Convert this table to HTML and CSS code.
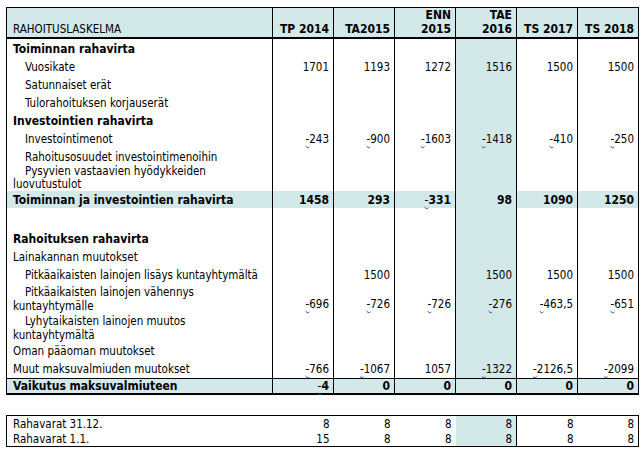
FILE: index.html
```html
<!DOCTYPE html>
<html lang="fi">
<head>
<meta charset="utf-8">
<title>Rahoituslaskelma</title>
<link rel="stylesheet" href="styles.css">
</head>
<body>
<div class="page">
<table class="sheet main">
<colgroup><col class="c-label"><col class="c-num"><col class="c-num"><col class="c-num"><col class="c-num"><col class="c-num"><col class="c-num"></colgroup>
<thead>
<tr class="head">
<th class="label">RAHOITUSLASKELMA</th><th>TP 2014</th><th>TA2015</th><th>ENN<br>2015</th><th class="tae">TAE<br>2016</th><th>TS 2017</th><th>TS 2018</th>
</tr>
</thead>
<tbody>
<tr class="first"><td class="label b">Toiminnan rahavirta</td><td></td><td></td><td></td><td class="tae"></td><td></td><td></td></tr>
<tr class="r18"><td class="label sub">Vuosikate</td><td>1701</td><td>1193</td><td>1272</td><td class="tae">1516</td><td>1500</td><td>1500</td></tr>
<tr class="r18"><td class="label sub">Satunnaiset erät</td><td></td><td></td><td></td><td class="tae"></td><td></td><td></td></tr>
<tr class="r18"><td class="label sub">Tulorahoituksen korjauserät</td><td></td><td></td><td></td><td class="tae"></td><td></td><td></td></tr>
<tr class="r18"><td class="label b">Investointien rahavirta</td><td></td><td></td><td></td><td class="tae"></td><td></td><td></td></tr>
<tr class="r18"><td class="label sub">Investointimenot</td><td><span class="neg">-</span>243</td><td><span class="neg">-</span>900</td><td><span class="neg">-</span>1603</td><td class="tae"><span class="neg">-</span>1418</td><td><span class="neg">-</span>410</td><td><span class="neg">-</span>250</td></tr>
<tr class="r17"><td class="label sub">Rahoitusosuudet investointimenoihin</td><td></td><td></td><td></td><td class="tae"></td><td></td><td></td></tr>
<tr class="r26"><td class="label sub tight">Pysyvien vastaavien hyödykkeiden<br>luovutustulot</td><td></td><td></td><td></td><td class="tae"></td><td></td><td></td></tr>
<tr class="r17 band b"><td class="label">Toiminnan ja investointien rahavirta</td><td>1458</td><td>293</td><td><span class="neg">-</span>331</td><td>98</td><td>1090</td><td>1250</td></tr>
<tr class="r22"><td class="label"></td><td></td><td></td><td></td><td class="tae"></td><td></td><td></td></tr>
<tr class="r18"><td class="label b">Rahoituksen rahavirta</td><td></td><td></td><td></td><td class="tae"></td><td></td><td></td></tr>
<tr class="r18"><td class="label">Lainakannan muutokset</td><td></td><td></td><td></td><td class="tae"></td><td></td><td></td></tr>
<tr class="r18"><td class="label sub">Pitkäaikaisten lainojen lisäys kuntayhtymältä</td><td></td><td>1500</td><td></td><td class="tae">1500</td><td>1500</td><td>1500</td></tr>
<tr class="r29"><td class="label sub">Pitkäaikaisten lainojen vähennys<br>kuntayhtymälle</td><td class="low"><span class="neg">-</span>696</td><td class="low"><span class="neg">-</span>726</td><td class="low"><span class="neg">-</span>726</td><td class="tae low"><span class="neg">-</span>276</td><td class="low"><span class="neg">-</span>463,5</td><td class="low"><span class="neg">-</span>651</td></tr>
<tr class="r29"><td class="label sub">Lyhytaikaisten lainojen muutos<br>kuntayhtymältä</td><td></td><td></td><td></td><td class="tae"></td><td></td><td></td></tr>
<tr class="r18"><td class="label">Oman pääoman muutokset</td><td></td><td></td><td></td><td class="tae"></td><td></td><td></td></tr>
<tr class="r18"><td class="label">Muut maksuvalmiuden muutokset</td><td><span class="neg">-</span>766</td><td><span class="neg">-</span>1067</td><td>1057</td><td class="tae"><span class="neg">-</span>1322</td><td><span class="neg">-</span>2126,5</td><td><span class="neg">-</span>2099</td></tr>
<tr class="r16 band b total"><td class="label">Vaikutus maksuvalmiuteen</td><td><span class="neg">-</span>4</td><td>0</td><td>0</td><td>0</td><td>0</td><td>0</td></tr>
</tbody>
</table>

<table class="sheet cash">
<colgroup><col class="c-label"><col class="c-num"><col class="c-num"><col class="c-num"><col class="c-num"><col class="c-num"><col class="c-num"></colgroup>
<tbody>
<tr><td class="label">Rahavarat 31.12.</td><td>8</td><td>8</td><td>8</td><td class="tae">8</td><td>8</td><td>8</td></tr>
<tr><td class="label">Rahavarat 1.1.</td><td>15</td><td>8</td><td>8</td><td class="tae">8</td><td>8</td><td>8</td></tr>
</tbody>
</table>
</div>
</body>
</html>
```

FILE: styles.css
```css
html, body {
  margin: 0;
  padding: 0;
  background: #ffffff;
}

.page {
  padding: 7px 0 0 6px;
  font-family: "DejaVu Sans Condensed", "DejaVu Sans", sans-serif;
  font-stretch: condensed;
  font-size: 11.5px;
  color: #000;
}

.sheet {
  border-collapse: collapse;
  table-layout: fixed;
  width: 632px;
}

.c-label { width: 266px; }
.c-num { width: 61px; }

.sheet td, .sheet th {
  padding: 0 4px 0 0;
  line-height: 14px;
  text-align: right;
  vertical-align: middle;
  white-space: nowrap;
  font-weight: normal;
}

.sheet .label {
  text-align: left;
  padding-left: 6px;
}

.sheet .sub { text-indent: 12px; }

.sheet .tight { line-height: 13px; }

.sheet .b, .sheet .b td { font-weight: bold; font-size: 12px; }

.sheet td.low { vertical-align: bottom; padding-bottom: 2px; }

.main {
  border: 1px solid #000;
  border-bottom-width: 2px;
}

.main td, .main th {
  border-left: 1px solid #000;
  border-right: 1px solid #000;
}

.head th {
  background: #d2e8e9;
  font-weight: bold;
  font-size: 12px;
  border-bottom: 2px solid #000;
  height: 27px;
  padding-bottom: 1px;
  vertical-align: bottom;
  line-height: 14px;
}

.head th.label { font-weight: normal; font-size: 11.5px; }

.tae { background: #d2e8e9; }
.band td { background: #d2e8e9; }

.first { height: 20px; }
.first td { vertical-align: bottom; padding-bottom: 2px; }

.r16 { height: 16px; }
.r17 { height: 17px; }
.r18 { height: 18px; }
.r22 { height: 22px; }
.r26 { height: 26px; }
.r29 { height: 29px; }

.total td { border-top: 1px solid #000; }

.neg {
  text-decoration: underline wavy #2a4bd7;
  text-decoration-thickness: 1px;
  text-underline-offset: 1px;
  font-weight: normal;
}

.cash {
  margin-top: 20px;
  border: 1px solid #000;
}

.cash td { height: 15px; }
.cash td.tae { border-right: 1px solid #000; }
```
